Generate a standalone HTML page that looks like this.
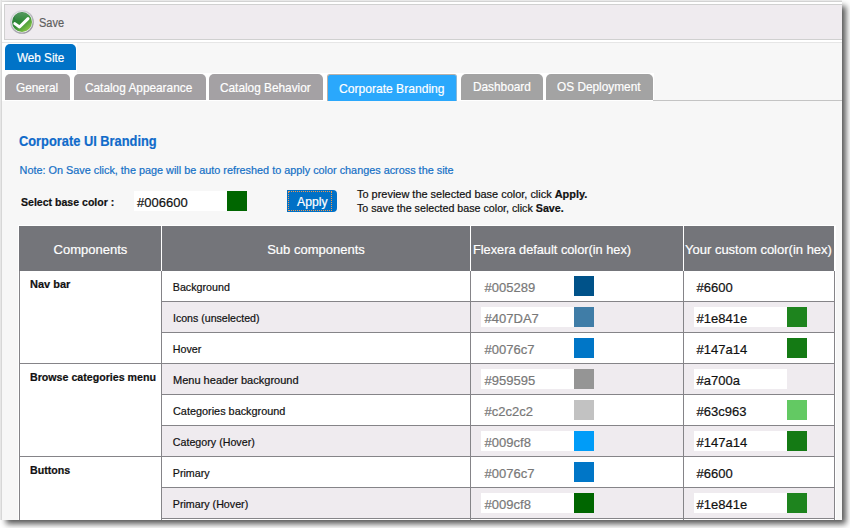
<!DOCTYPE html>
<html><head><meta charset="utf-8">
<style>
*{margin:0;padding:0;box-sizing:border-box}
html,body{width:850px;height:528px;overflow:hidden;background:#fff}
body{font-family:"Liberation Sans",sans-serif;position:relative}
.a{position:absolute;white-space:nowrap;-webkit-text-stroke:0.2px currentColor}
#win{position:absolute;left:2px;top:2px;width:840px;height:518px;background:#f7f7f7;box-shadow:4px 4px 6px rgba(0,0,0,.66)}
.sh{position:absolute}
.tab{position:absolute;background:#a4a3a4;border-radius:5px 5px 0 0;color:#fff;text-align:center}
</style></head><body>
<div class="sh" style="left:0;top:0;width:842px;height:2px;background:linear-gradient(#eeeeee 50%,#dddddd 50%)"></div>
<div class="sh" style="left:0;top:0;width:2px;height:520px;background:linear-gradient(90deg,#ececec 50%,#e2e2e2 50%)"></div>
<div id="win">
<div class="a" style="left:0px;top:0px;width:840px;height:41px;background:#fff;"></div>
<div class="a" style="left:2px;top:2px;width:838px;height:36px;background:#efebef;border:1px solid #d0d0d0;border-right:none"></div>
<div class="a" style="left:0px;top:40px;width:840px;height:1px;background:#e6e6e6;"></div>
<svg class="a" style="left:8px;top:7.5px" width="24" height="24" viewBox="0 0 24 24">
<defs><linearGradient id="g1" x1="0.15" y1="0.1" x2="0.85" y2="0.95">
<stop offset="0" stop-color="#2f7e40"/><stop offset="0.45" stop-color="#2f8a36"/><stop offset="1" stop-color="#92cc48"/></linearGradient>
<linearGradient id="g2" x1="0" y1="0" x2="0.6" y2="1"><stop offset="0" stop-color="#e2e2e6"/><stop offset="1" stop-color="#9a9aa2"/></linearGradient>
<linearGradient id="g3" x1="0" y1="0" x2="0" y2="1"><stop offset="0" stop-color="#fff" stop-opacity="0.18"/><stop offset="1" stop-color="#fff" stop-opacity="0"/></linearGradient></defs>
<circle cx="12" cy="12" r="11.2" fill="#f6f6f6" stroke="url(#g2)" stroke-width="1.3"/>
<circle cx="12" cy="12" r="10" fill="url(#g1)"/>
<ellipse cx="12" cy="7" rx="7.5" ry="4.5" fill="url(#g3)"/>
<path d="M4.8 13.6 L9.5 17 L18 8.6" fill="none" stroke="#fff" stroke-width="3" stroke-linecap="round" stroke-linejoin="round"/>
</svg>
<div class="a" style="left:37px;top:10.67px;font-size:12.5px;line-height:20px;color:#5e5e5e;font-weight:400;transform:scaleX(0.88);transform-origin:0 0;">Save</div>
<div class="a" style="left:0px;top:41px;width:75px;height:31px;background:#fff;"></div>
<div class="a" style="left:3px;top:42px;width:71px;height:26px;background:#0073c7;border-radius:5px 5px 0 0"></div>
<div class="a" style="left:15px;top:45.50px;font-size:13px;line-height:20px;color:#fff;font-weight:400;transform:scaleX(0.9);transform-origin:0 0;">Web Site</div>
<div class="a" style="left:0px;top:71px;width:652px;height:27px;background:#fff;"></div>
<div class="a" style="left:0px;top:98px;width:651px;height:1px;background:#fff;"></div>
<div class="a" style="left:651px;top:98px;width:189px;height:1px;background:#c4c4c4;"></div>
<div class="a" style="left:3px;top:72px;width:65px;height:26px;background:#a4a1a4;border-radius:5px 5px 0 0"></div>
<div class="a" style="left:14px;top:75.50px;font-size:13px;line-height:20px;color:#fff;font-weight:400;transform:scaleX(0.91);transform-origin:0 0;">General</div>
<div class="a" style="left:72px;top:72px;width:132px;height:26px;background:#a4a1a4;border-radius:5px 5px 0 0"></div>
<div class="a" style="left:82.8px;top:75.50px;font-size:13px;line-height:20px;color:#fff;font-weight:400;transform:scaleX(0.91);transform-origin:0 0;">Catalog Appearance</div>
<div class="a" style="left:207px;top:72px;width:114px;height:26px;background:#a4a1a4;border-radius:5px 5px 0 0"></div>
<div class="a" style="left:217.8px;top:75.50px;font-size:13px;line-height:20px;color:#fff;font-weight:400;transform:scaleX(0.91);transform-origin:0 0;">Catalog Behavior</div>
<div class="a" style="left:325px;top:72px;width:130px;height:27px;background:#2aa8fc;border-radius:3px 3px 0 0;border:1px solid #b9b1aa;border-bottom:none;border-right-color:#8ab8d8"></div>
<div class="a" style="left:337.3px;top:76.50px;font-size:13px;line-height:20px;color:#fff;font-weight:400;transform:scaleX(0.93);transform-origin:0 0;">Corporate Branding</div>
<div class="a" style="left:459px;top:72px;width:82px;height:26px;background:#a3a3a3;border-radius:5px 5px 0 0"></div>
<div class="a" style="left:470.6px;top:74.50px;font-size:13px;line-height:20px;color:#fff;font-weight:400;transform:scaleX(0.91);transform-origin:0 0;">Dashboard</div>
<div class="a" style="left:544px;top:72px;width:107px;height:26px;background:#a3a3a3;border-radius:5px 5px 0 0"></div>
<div class="a" style="left:555.1px;top:74.50px;font-size:13px;line-height:20px;color:#fff;font-weight:400;transform:scaleX(0.91);transform-origin:0 0;">OS Deployment</div>
<div class="a" style="left:16.9px;top:128.65px;font-size:14px;line-height:20px;color:#106bca;font-weight:700;transform:scaleX(0.917);transform-origin:0 0;">Corporate UI Branding</div>
<div class="a" style="left:17.6px;top:158.24px;font-size:10.85px;line-height:20px;color:#1570c6;font-weight:400;">Note: On Save click, the page will be auto refreshed to apply color changes across the site</div>
<div class="a" style="left:19.2px;top:189.69px;font-size:11px;line-height:20px;color:#111;font-weight:700;transform:scaleX(0.96);transform-origin:0 0;">Select base color :</div>
<div class="a" style="left:132px;top:189px;width:93px;height:20px;background:#fff;"></div>
<div class="a" style="left:135px;top:190.50px;font-size:13px;line-height:20px;color:#111;font-weight:400;">#006600</div>
<div class="a" style="left:225px;top:189px;width:20px;height:20px;background:#006600;"></div>
<div class="a" style="left:285px;top:188px;width:50px;height:22px;background:#0070c6;border-radius:0 4px 4px 0"></div>
<div class="a" style="left:286px;top:189px;width:44px;height:20px;border:1px dotted #f09a50"></div>
<div class="a" style="left:295px;top:189.77px;font-size:12.2px;line-height:20px;color:#fff;font-weight:400;">Apply</div>
<div class="a" style="left:355.4px;top:182.22px;font-size:10.9px;line-height:20px;color:#111;font-weight:400;transform:scaleX(1.005);transform-origin:0 0;">To preview the selected base color, click <b>Apply.</b></div>
<div class="a" style="left:355.4px;top:196.22px;font-size:10.9px;line-height:20px;color:#111;font-weight:400;transform:scaleX(0.981);transform-origin:0 0;">To save the selected base color, click <b>Save.</b></div>
<div class="a" style="left:16px;top:223px;width:818px;height:295px;background:#fff;"></div>
<div class="a" style="left:17px;top:224px;width:815px;height:45px;background:#74757a;"></div>
<div class="a" style="left:159px;top:224px;width:1px;height:45px;background:#fff;"></div>
<div class="a" style="left:468px;top:224px;width:1px;height:45px;background:#fff;"></div>
<div class="a" style="left:681px;top:224px;width:1px;height:45px;background:#fff;"></div>
<div class="a" style="left:51.6px;top:238.00px;font-size:13px;line-height:20px;color:#fff;font-weight:400;">Components</div>
<div class="a" style="left:265.2px;top:238.00px;font-size:13px;line-height:20px;color:#fff;font-weight:400;">Sub components</div>
<div class="a" style="left:471px;top:238.08px;font-size:12.75px;line-height:20px;color:#fff;font-weight:400;">Flexera default color(in hex)</div>
<div class="a" style="left:683px;top:238.00px;font-size:13px;line-height:20px;color:#fff;font-weight:400;">Your custom color(in hex)</div>
<div class="a" style="left:170.8px;top:275.29px;font-size:10.7px;line-height:20px;color:#111;font-weight:400;">Background</div>
<div class="a" style="left:479px;top:274px;width:93px;height:20px;background:#fff;"></div>
<div class="a" style="left:572px;top:274px;width:20px;height:20px;background:#005289;"></div>
<div class="a" style="left:482.6px;top:275.50px;font-size:13px;line-height:20px;color:#787878;font-weight:400;">#005289</div>
<div class="a" style="left:692px;top:274px;width:93px;height:20px;background:#fff;"></div>
<div class="a" style="left:694.6px;top:275.50px;font-size:13px;line-height:20px;color:#111;font-weight:400;">#6600</div>
<div class="a" style="left:159px;top:299px;width:674px;height:1px;background:#858488;"></div>
<div class="a" style="left:160px;top:300px;width:672px;height:30px;background:#efebef;"></div>
<div class="a" style="left:170.8px;top:306.29px;font-size:10.7px;line-height:20px;color:#111;font-weight:400;transform:scaleX(0.99);transform-origin:0 0;">Icons (unselected)</div>
<div class="a" style="left:479px;top:305px;width:93px;height:20px;background:#fff;"></div>
<div class="a" style="left:572px;top:305px;width:20px;height:20px;background:#407da7;"></div>
<div class="a" style="left:482.6px;top:306.50px;font-size:13px;line-height:20px;color:#787878;font-weight:400;">#407DA7</div>
<div class="a" style="left:692px;top:305px;width:93px;height:20px;background:#fff;"></div>
<div class="a" style="left:785px;top:305px;width:20px;height:20px;background:#1e841e;"></div>
<div class="a" style="left:694.6px;top:306.50px;font-size:13px;line-height:20px;color:#111;font-weight:400;">#1e841e</div>
<div class="a" style="left:159px;top:330px;width:674px;height:1px;background:#858488;"></div>
<div class="a" style="left:170.8px;top:337.29px;font-size:10.7px;line-height:20px;color:#111;font-weight:400;">Hover</div>
<div class="a" style="left:479px;top:336px;width:93px;height:20px;background:#fff;"></div>
<div class="a" style="left:572px;top:336px;width:20px;height:20px;background:#0076c7;"></div>
<div class="a" style="left:482.6px;top:337.50px;font-size:13px;line-height:20px;color:#787878;font-weight:400;">#0076c7</div>
<div class="a" style="left:692px;top:336px;width:93px;height:20px;background:#fff;"></div>
<div class="a" style="left:785px;top:336px;width:20px;height:20px;background:#147a14;"></div>
<div class="a" style="left:694.6px;top:337.50px;font-size:13px;line-height:20px;color:#111;font-weight:400;">#147a14</div>
<div class="a" style="left:159px;top:361px;width:674px;height:1px;background:#858488;"></div>
<div class="a" style="left:160px;top:362px;width:672px;height:30px;background:#efebef;"></div>
<div class="a" style="left:170.8px;top:368.29px;font-size:10.7px;line-height:20px;color:#111;font-weight:400;transform:scaleX(1.031);transform-origin:0 0;">Menu header background</div>
<div class="a" style="left:479px;top:367px;width:93px;height:20px;background:#fff;"></div>
<div class="a" style="left:572px;top:367px;width:20px;height:20px;background:#959595;"></div>
<div class="a" style="left:482.6px;top:368.50px;font-size:13px;line-height:20px;color:#787878;font-weight:400;">#959595</div>
<div class="a" style="left:692px;top:367px;width:93px;height:20px;background:#fff;"></div>
<div class="a" style="left:694.6px;top:368.50px;font-size:13px;line-height:20px;color:#111;font-weight:400;">#a700a</div>
<div class="a" style="left:159px;top:392px;width:674px;height:1px;background:#858488;"></div>
<div class="a" style="left:170.8px;top:399.29px;font-size:10.7px;line-height:20px;color:#111;font-weight:400;transform:scaleX(1.017);transform-origin:0 0;">Categories background</div>
<div class="a" style="left:479px;top:398px;width:93px;height:20px;background:#fff;"></div>
<div class="a" style="left:572px;top:398px;width:20px;height:20px;background:#c2c2c2;"></div>
<div class="a" style="left:482.6px;top:399.50px;font-size:13px;line-height:20px;color:#787878;font-weight:400;">#c2c2c2</div>
<div class="a" style="left:692px;top:398px;width:93px;height:20px;background:#fff;"></div>
<div class="a" style="left:785px;top:398px;width:20px;height:20px;background:#63c963;"></div>
<div class="a" style="left:694.6px;top:399.50px;font-size:13px;line-height:20px;color:#111;font-weight:400;">#63c963</div>
<div class="a" style="left:159px;top:423px;width:674px;height:1px;background:#858488;"></div>
<div class="a" style="left:160px;top:424px;width:672px;height:30px;background:#efebef;"></div>
<div class="a" style="left:170.8px;top:430.29px;font-size:10.7px;line-height:20px;color:#111;font-weight:400;">Category (Hover)</div>
<div class="a" style="left:479px;top:429px;width:93px;height:20px;background:#fff;"></div>
<div class="a" style="left:572px;top:429px;width:20px;height:20px;background:#009cf8;"></div>
<div class="a" style="left:482.6px;top:430.50px;font-size:13px;line-height:20px;color:#787878;font-weight:400;">#009cf8</div>
<div class="a" style="left:692px;top:429px;width:93px;height:20px;background:#fff;"></div>
<div class="a" style="left:785px;top:429px;width:20px;height:20px;background:#147a14;"></div>
<div class="a" style="left:694.6px;top:430.50px;font-size:13px;line-height:20px;color:#111;font-weight:400;">#147a14</div>
<div class="a" style="left:159px;top:454px;width:674px;height:1px;background:#858488;"></div>
<div class="a" style="left:170.8px;top:461.29px;font-size:10.7px;line-height:20px;color:#111;font-weight:400;">Primary</div>
<div class="a" style="left:479px;top:460px;width:93px;height:20px;background:#fff;"></div>
<div class="a" style="left:572px;top:460px;width:20px;height:20px;background:#0076c7;"></div>
<div class="a" style="left:482.6px;top:461.50px;font-size:13px;line-height:20px;color:#787878;font-weight:400;">#0076c7</div>
<div class="a" style="left:692px;top:460px;width:93px;height:20px;background:#fff;"></div>
<div class="a" style="left:694.6px;top:461.50px;font-size:13px;line-height:20px;color:#111;font-weight:400;">#6600</div>
<div class="a" style="left:159px;top:485px;width:674px;height:1px;background:#858488;"></div>
<div class="a" style="left:160px;top:486px;width:672px;height:30px;background:#efebef;"></div>
<div class="a" style="left:170.8px;top:492.29px;font-size:10.7px;line-height:20px;color:#111;font-weight:400;">Primary (Hover)</div>
<div class="a" style="left:479px;top:491px;width:93px;height:20px;background:#fff;"></div>
<div class="a" style="left:572px;top:491px;width:20px;height:20px;background:#006600;"></div>
<div class="a" style="left:482.6px;top:492.50px;font-size:13px;line-height:20px;color:#787878;font-weight:400;">#009cf8</div>
<div class="a" style="left:692px;top:491px;width:93px;height:20px;background:#fff;"></div>
<div class="a" style="left:785px;top:491px;width:20px;height:20px;background:#1e841e;"></div>
<div class="a" style="left:694.6px;top:492.50px;font-size:13px;line-height:20px;color:#111;font-weight:400;">#1e841e</div>
<div class="a" style="left:159px;top:516px;width:674px;height:1px;background:#858488;"></div>
<div class="a" style="left:28px;top:272.19px;font-size:11px;line-height:20px;color:#111;font-weight:700;">Nav bar</div>
<div class="a" style="left:28px;top:365.31px;font-size:10.65px;line-height:20px;color:#111;font-weight:700;">Browse categories menu</div>
<div class="a" style="left:28px;top:458.31px;font-size:10.65px;line-height:20px;color:#111;font-weight:700;">Buttons</div>
<div class="a" style="left:17px;top:361px;width:143px;height:1px;background:#858488;"></div>
<div class="a" style="left:17px;top:454px;width:143px;height:1px;background:#858488;"></div>
<div class="a" style="left:17px;top:269px;width:1px;height:249px;background:#858488;"></div>
<div class="a" style="left:159px;top:269px;width:1px;height:249px;background:#858488;"></div>
<div class="a" style="left:468px;top:269px;width:1px;height:249px;background:#858488;"></div>
<div class="a" style="left:681px;top:269px;width:1px;height:249px;background:#858488;"></div>
<div class="a" style="left:832px;top:269px;width:1px;height:249px;background:#858488;"></div>
</div>
</body></html>
